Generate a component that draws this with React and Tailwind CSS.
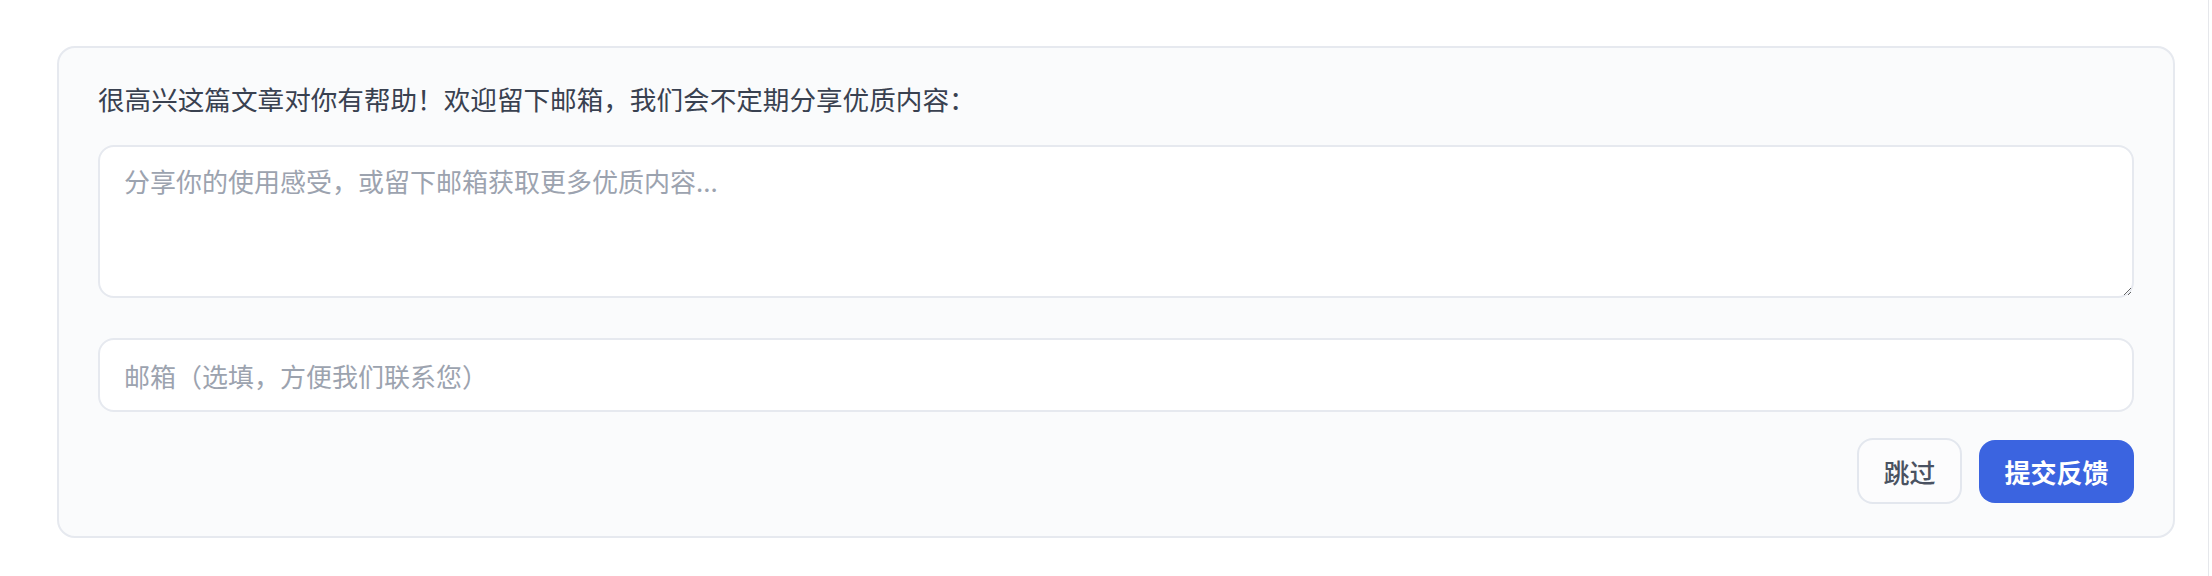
export default function App() {
  return (
    <div className="w-full h-[576px] bg-white flex font-['Noto_Sans_CJK_SC',sans-serif]">
      <div className="w-[2209px] h-full border-r border-[#e5e7eb] pt-[46px] pl-[57px] pr-[33px]">
        <div className="rounded-[18px] border-2 border-[#e6e9ef] bg-[#fafbfc] px-[39px] pt-[31px] pb-[32px]">
          <p className="text-[26.6px] leading-[40px] text-[#394150]">
            很高兴这篇文章对你有帮助！欢迎留下邮箱，我们会不定期分享优质内容：
          </p>

          <textarea
            className="block w-full h-[153px] mt-[26px] resize-y rounded-[16px] border-2 border-[#e6e9ef] bg-white px-[24px] pt-[14px] text-[26px] leading-[39px] text-[#3f4755] placeholder:text-[#9ca3af] outline-none"
            placeholder="分享你的使用感受，或留下邮箱获取更多优质内容..."
          />

          <input
            type="email"
            className="block w-full h-[74px] mt-[40px] rounded-[16px] border-2 border-[#e6e9ef] bg-white px-[24px] text-[26px] text-[#3f4755] placeholder:text-[#9ca3af] outline-none"
            placeholder="邮箱（选填，方便我们联系您）"
          />

          <div className="mt-[26px] flex items-center justify-end gap-[17px]">
            <button className="w-[105px] h-[66px] rounded-[16px] border-2 border-[#e3e7ee] bg-[#fcfcfd] text-[26px] font-medium text-[#4a5261]">
              跳过
            </button>
            <button className="w-[155px] h-[63px] rounded-[16px] bg-[#3b64e0] text-[26px] font-bold text-white">
              提交反馈
            </button>
          </div>
        </div>
      </div>
    </div>
  );
}
